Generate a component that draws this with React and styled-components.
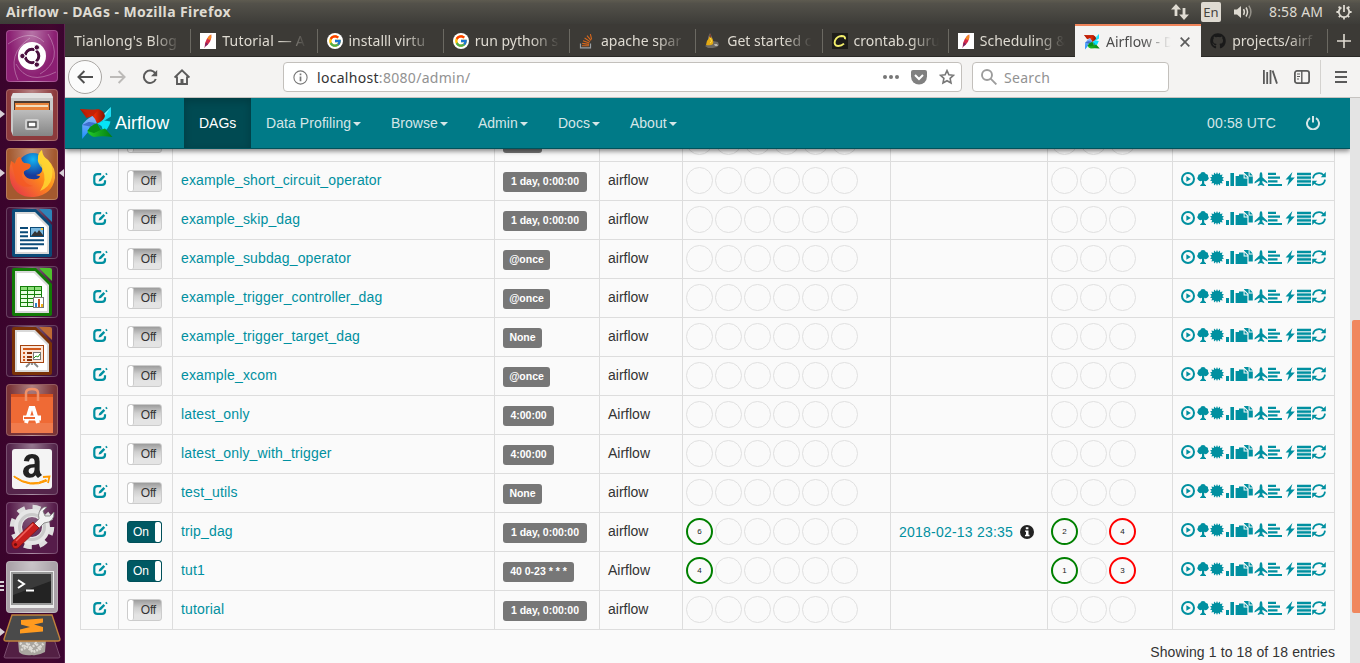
import React from 'react';
import styled, { createGlobalStyle, css } from 'styled-components';
import { FcGoogle } from 'react-icons/fc';
import { FaGithub } from 'react-icons/fa';

const ui = `"Noto Sans", "Open Sans", sans-serif`;
const web = `"Liberation Sans", Arial, sans-serif`;

const Global = createGlobalStyle`
  * { box-sizing: border-box; }
  html, body { margin: 0; padding: 0; }
  body { width: 1360px; height: 663px; overflow: hidden; font-family: ${web}; }
  svg { display: block; flex: none; }
`;

const Screen = styled.div`
  display: flex;
  flex-direction: column;
  width: 1360px;
  height: 663px;
  overflow: hidden;
`;
const Panel = styled.header`
  height: 24px;
  flex: none;
  display: flex;
  align-items: center;
  padding: 0 6px;
  color: #dfdbd2;
  background: linear-gradient(#5e5b50, #53514a 15%, #3d3c38);
  font: 13px/24px ${ui};
`;
const PanelTitle = styled.div`
  flex: 1;
  font-weight: 700;
  font-size: 14px;
  letter-spacing: 0.42px;
`;
const Indicators = styled.div`
  display: flex;
  align-items: center;
  padding-right: 2px;
`;
const Lang = styled.span`
  width: 20px;
  height: 20px;
  margin: 0 13px 0 12px;
  border-radius: 2px;
  background: #dfdbd2;
  color: #46443e;
  text-align: center;
  font: 13px/20px ${ui};
`;
const Clock = styled.span`
  width: 54px;
  margin: 0 13px 0 16px;
  white-space: nowrap;
  font-size: 14px;
  letter-spacing: 0.15px;
`;
const Body = styled.div`
  display: flex;
  flex: 1;
  min-height: 0;
`;
const Launcher = styled.aside`
  width: 65px;
  flex: none;
  display: flex;
  flex-direction: column;
  gap: 7px;
  padding: 6px 0 0 0;
  border-right: 1px solid #5e2450;
  background: linear-gradient(90deg, #3a042c, #42062f 80%, #3b0430);
  overflow: hidden;
`;
const Slot = styled.div`
  height: 52px;
  flex: none;
  display: flex;
  align-items: center;
  position: relative;
  padding-left: 6px;
`;
const Tile = styled.div`
  width: 52px;
  height: 52px;
  border-radius: 4px;
  border: 1px solid rgba(255, 255, 255, 0.2);
  background: radial-gradient(ellipse at 50% 0, rgba(255, 255, 255, 0.38), rgba(255, 255, 255, 0) 65%), ${p => p.$bg};
  svg { margin: -1px; }
`;
const Pip = styled.i`
  position: absolute;
  top: ${p => p.$y || 21}px;
  ${p => (p.$right ? 'right: 0;' : 'left: 0;')}
  border: 4px solid transparent;
  ${p => (p.$right ? 'border-right: 5px solid #d8d0d6; border-left: 0;' : 'border-left: 5px solid #d8d0d6; border-right: 0;')}
`;
const Bars = styled.i`
  position: absolute;
  left: 0;
  top: 20px;
  width: 4px;
  height: 11px;
  background: repeating-linear-gradient(#d8d0d6 0 2px, transparent 2px 4px);
`;
const Folded = styled.div`
  position: relative;
  height: 45px;
  margin-top: -6px;
  padding-left: 3px;
`;

const Browser = styled.main`
  flex: 1;
  min-width: 0;
  display: flex;
  flex-direction: column;
`;
const Tabs = styled.div`
  height: 33px;
  flex: none;
  display: flex;
  background: #3c3a36;
  box-shadow: inset 0 -1px #2a2926;
`;
const Tab = styled.div`
  width: 126.25px;
  flex: none;
  height: 33px;
  display: flex;
  align-items: center;
  position: relative;
  padding-left: 9px;
  gap: 6px;
  color: #dfdbd2;
  font: 14px/33px ${ui};
  ${p => !p.$noSep && css`
    &::after {
      content: '';
      position: absolute;
      right: 0;
      top: 5px;
      width: 1px;
      height: 24px;
      background: #6b6962;
    }
  `}
  ${p => p.$active && css`
    background: #f4f3f2;
    border-top: 2px solid #f0845a;
    color: #4c4c4c;
    line-height: 31px;
  `}
`;
const TabText = styled.span`
  width: ${p => p.$w || 88}px;
  white-space: nowrap;
  letter-spacing: ${p => p.$ls || 0}px;
  mask-image: linear-gradient(90deg, #000 calc(100% - 32px), transparent calc(100% - 3px));
`;
const Favicon = styled.span`
  width: 16px;
  height: 16px;
  display: flex;
  align-items: center;
  justify-content: center;
  flex: none;
  overflow: hidden;
  border-radius: ${p => (p.$round ? '50%' : 0)};
  background: ${p => p.$bg || 'transparent'};
`;
const NewTab = styled.div`
  display: flex;
  align-items: center;
  padding-left: 9px;
`;
const Toolbar = styled.div`
  height: 41px;
  flex: none;
  display: flex;
  align-items: center;
  background: #f4f3f2;
  border-bottom: 1px solid #c6c3c0;
  color: #5a5a5a;
`;
const BackButton = styled.div`
  width: 34px;
  height: 34px;
  margin: 0 8px 0 3px;
  border: 1px solid #a9a6a3;
  border-radius: 50%;
  background: #fbfbfb;
  display: grid;
  place-items: center;
`;
const NavIcons = styled.div`
  display: flex;
  align-items: center;
  gap: 16px;
  width: 173px;
`;
const Field = styled.div`
  height: 30px;
  width: ${p => p.$w}px;
  margin-right: ${p => p.$mr}px;
  display: flex;
  align-items: center;
  border: 1px solid #c3c0bc;
  border-radius: 4px;
  background: #fff;
  padding: 0 6px 0 ${p => p.$pl}px;
  font: 14px/28px ${ui};
  color: #8d8d8d;
`;
const UrlText = styled.span`
  flex: 1;
  padding: 1px 0 0 ${p => p.$pl || 9}px;
  letter-spacing: 0.3px;
  color: #929292;
  b { font-weight: 400; color: #333; }
`;
const FieldIcons = styled.div`
  display: flex;
  align-items: center;
  gap: 12px;
`;
const SidebarIcon = styled.svg`
  margin-left: 16px;
`;
const MenuCell = styled.div`
  height: 34px;
  margin-left: 10px;
  padding-left: 14px;
  border-left: 1px solid #d4d2cf;
  display: flex;
  align-items: center;
`;
const Viewport = styled.div`
  flex: 1;
  min-height: 0;
  display: flex;
  background: #e4e4e4;
`;
const Page = styled.div`
  width: 1285px;
  background: #fafafa;
  overflow: hidden;
  color: #333;
  font: 14px/20px ${web};
`;
const ScrollTrack = styled.div`
  flex: 1;
  padding: 222px 0 0 2px;
`;
const ScrollThumb = styled.div`
  height: 293px;
  background: #f0875e;
  border-radius: 2px 0 0 2px;
`;
const Navbar = styled.nav`
  position: relative;
  z-index: 1;
  height: 51px;
  display: flex;
  padding-left: 15px;
  background: #007a87;
  border-bottom: 1px solid #00525b;
  box-shadow: 0 2px 5px rgba(0, 0, 0, 0.5);
`;
const Brand = styled.div`
  display: flex;
  align-items: center;
  width: 104px;
  color: #fff;
  font-size: 18px;
  letter-spacing: 0.02px;
  gap: 2px;
  span { padding-bottom: 1px; }
`;
const NavItem = styled.div`
  height: 50px;
  display: flex;
  align-items: center;
  width: ${p => p.$w}px;
  padding-left: 15px;
  white-space: nowrap;
  color: ${p => (p.$active ? '#fff' : '#d5e6e7')};
  letter-spacing: ${p => p.$ls || 0}px;
  ${p => p.$active && css`
    background: #004a52;
    box-shadow: inset 0 3px 9px rgba(0, 0, 0, 0.2);
  `}
`;
const Caret = styled.i`
  margin: 2px 0 0 2px;
  border: 4px solid transparent;
  border-top-color: #d5e6e7;
  border-bottom: 0;
`;
const NavRight = styled.div`
  margin-left: auto;
  display: flex;
  align-items: center;
  gap: 30px;
  padding: 0 30px 1px 0;
  color: #d5e6e7;
  letter-spacing: 0.14px;
`;
const Table = styled.div`
  width: 1255px;
  margin: -27px 0 0 15px;
  border: solid #ddd;
  border-width: 1px 0 0 1px;
`;
const Row = styled.div`
  display: grid;
  grid-template-columns: 38px 54px 322px 105px 83px 208px 157px 125px 162px;
  height: 39px;
`;
const Cell = styled.div`
  border: solid #ddd;
  border-width: 0 1px 1px 0;
  display: flex;
  align-items: ${p => (p.$start ? 'flex-start' : 'center')};
  padding: ${p => p.$pad || '0 0 2px 8px'};
  white-space: nowrap;
  letter-spacing: ${p => p.$ls || 0}px;
`;
const Link = styled.span`
  color: #0090a0;
`;
const LastRun = styled.div`
  display: flex;
  align-items: center;
  gap: 7px;
`;
const Badge = styled.span`
  height: 20px;
  width: ${p => p.$w}px;
  text-align: center;
  border-radius: 3px;
  background: #777;
  color: #fff;
  font: 700 10.5px/19px ${web};
`;
const Toggle = styled.div`
  width: 35px;
  height: 22px;
  border-radius: 3px;
  border: 1px solid ${p => (p.$on ? '#00505a' : '#ccc')};
  display: flex;
  overflow: hidden;
  justify-content: space-between;
  flex-direction: ${p => (p.$on ? 'row-reverse' : 'row')};
  font: 12px/21px ${web};
  letter-spacing: -0.2px;
  color: ${p => (p.$on ? '#fff' : '#333')};
  background: ${p => (p.$on ? '#005963' : 'linear-gradient(#9c9c9c, #cfcfcf 40%, #e4e4e4 75%)')};
  padding: ${p => (p.$on ? '0 0 0 5px' : '0 5px 0 0')};
`;
const Knob = styled.i`
  width: 6px;
  background: #fff;
  border: solid #ccc;
  border-width: ${p => (p.$on ? '0' : '0 1px 0 0')};
  border-radius: 2px;
`;
const Ring = styled.span`
  width: 27px;
  height: 27px;
  margin-right: 2px;
  border-radius: 50%;
  border: 1px solid #e0e0e0;
  display: grid;
  place-items: center;
  font: 8px/10px ${web};
  color: #222;
  padding-top: 1px;
  ${p => p.$c && css`
    border: 2px solid ${p.$c};
  `}
`;
const Links = styled.div`
  display: flex;
  gap: 0.55px;
  color: #0090a0;
`;
const Footer = styled.div`
  width: 1270px;
  padding-top: 12px;
  text-align: right;
  letter-spacing: 0.12px;
`;

const Pinwheel = ({ size }) => (
  <svg width={size} height={size} viewBox="0 0 33 33">
    <defs>
      <linearGradient id="pr" x1="0" x2="1"><stop offset="0" stopColor="#a01604" /><stop offset=".6" stopColor="#e92b05" /><stop offset="1" stopColor="#7c1204" /></linearGradient>
      <linearGradient id="pb" x1="0" x2="0" y1="0" y2="1"><stop offset="0" stopColor="#8fb6f7" /><stop offset="1" stopColor="#1c8fff" /></linearGradient>
      <linearGradient id="pg" x1="0" x2="1"><stop offset="0" stopColor="#22c92a" /><stop offset="1" stopColor="#047d10" /></linearGradient>
    </defs>
    <path d="M31 0V9.5L24.5 13.5L17 16.5L19.5 11.5Z" fill="#1bdcf4" />
    <path d="M31 0L21 14L19.5 11.5Z" fill="#7af3ff" />
    <path d="M30.5 14.5Q29 21 23.5 25.5L17 16.5L24.5 13.5Z" fill="#06e3f7" />
    <path d="M23.5 25.5L17 16.5L21.5 19Z" fill="#027a8c" />
    <path d="M0 2Q10 3.4 19 2.2Q24.5 4.5 25 9Q24 14 17 16.5L12.5 9L6.5 11Z" fill="url(#pr)" />
    <path d="M0 2Q10 3.4 19 2.2L12.5 9L6.5 6Z" fill="#c42207" />
    <path d="M2.2 32V18Q5 13 12.5 9Q16 12 17 16.5L10 19.5L8 25Z" fill="url(#pb)" />
    <path d="M2.2 18L10 19.5L17 16.5Q11 14.5 8.5 15Z" fill="#3f6fd0" />
    <path d="M32.5 30Q22 28.6 14 30Q8.5 28 7.4 24Q11 18 17 16.5L20.5 23L25 21.5Z" fill="url(#pg)" />
    <path d="M7.4 24Q11 18 17 16.5L20.5 23L14 26Z" fill="#078f18" />
  </svg>
);
const Feather = () => (
  <Favicon $bg="#fff">
    <svg width="16" height="16" viewBox="0 0 16 16">
      <path d="M4.6 15Q4.2 10 6.8 6 9 2 11.2 1.4 12 4.6 10 8.8 8 12.2 5.6 13Z" fill="#d32a4a" />
      <path d="M7 6Q9 2 11.2 1.4 11.6 4 10.6 7Z" fill="#f58a22" />
      <path d="M4.6 15Q5 12 6 9.5L8 11Q6.5 13 5.6 13Z" fill="#73246a" />
    </svg>
  </Favicon>
);
const StackIcon = () => (
  <svg width="16" height="16" viewBox="0 0 16 16" fill="none">
    <path d="M1.5 10.5V14.8H11.5V10.5" stroke="#9aa0a5" strokeWidth="1.2" />
    <path d="M3 12.8H10M3.2 10.4L10 11.4M4 7.8L10.4 10M5.6 5L11 8.6M8 2.6L12 7.4M11.4 1.2L12.6 6.4" stroke="#d9681c" strokeWidth="1.1" />
  </svg>
);
const Camp = () => (
  <svg width="16" height="16" viewBox="0 0 16 16">
    <path d="M3 4L5 0L7 4L8 8L13 9L14 12L12 14L8 15H3L0 13L3 11Z" fill="#6d6a64" />
    <path d="M1 12Q1 8 4 5Q4 2 6 4Q9 7 8 11Q6 13 1 12Z" fill="#e2a914" />
    <path d="M5 5Q8 9 5 10" stroke="#ffe04a" fill="none" />
    <path d="M4 3L6 1V5Z" fill="#813f2c" />
    <path d="M9 11L12 11 13 13 10 13Z" fill="#b9b6ad" />
  </svg>
);
const Cron = () => (
  <Favicon $bg="#1d1c19">
    <svg width="16" height="16" viewBox="0 0 16 16">
      <path d="M13 6.2Q13.6 3 9.5 3 5 3.2 3 7.6 1.5 12.6 6.2 13 9.5 13 12 10.6" fill="none" stroke="#f3ee6b" strokeWidth="1.9" />
    </svg>
  </Favicon>
);

const stroke = { fill: 'none', stroke: 'currentColor' };
const PlayCircle = () => (
  <svg width="14" height="16" viewBox="0 0 14 16">
    <circle cx="7" cy="8" r="6" {...stroke} strokeWidth="2" />
    <path d="M5.4 5.2V10.8L9.8 8Z" fill="currentColor" />
  </svg>
);
const Tree = () => (
  <svg width="14" height="16" viewBox="0 0 14 16" fill="currentColor">
    <path d="M7 1Q9.4 1 9.8 3 12.4 3.2 12 5.4 13.8 7.2 12 8.8 10.6 10.8 8.2 9.8L8.2 12.5 9.6 14H10V15H4.2V14H4.6L6 12.5V9.8Q3.4 10.8 2.1 8.8 .3 7.2 2 5.4 1.8 3.2 4.3 3 4.6 1 7 1Z" />
  </svg>
);
const Certificate = () => (
  <svg width="14" height="16" viewBox="0 0 14 16" fill="currentColor">
    <path d="M7 1L8 3.2 10 1.6 10.2 4 12.6 3.6 11.8 5.8 14 6.4 12.3 8 14 9.6 11.8 10.2 12.6 12.4 10.2 12 10 14.4 8 12.8 7 15 6 12.8 4 14.4 3.8 12 1.4 12.4 2.2 10.2 0 9.6 1.7 8 0 6.4 2.2 5.8 1.4 3.6 3.8 4 4 1.6 6 3.2Z" />
  </svg>
);
const Stats = () => (
  <svg width="14" height="16" viewBox="0 0 14 16" fill="currentColor">
    <path d="M1 10h3v5H1zM5.4 2h3.6v13H5.4zM10.6 5h3.6v10h-3.6z" />
  </svg>
);
const Duplicate = () => (
  <svg width="14" height="16" viewBox="0 0 14 16" fill="currentColor">
    <path d="M-.6 3.4H4.6V7.6H8.4V15H-.6ZM5.6 3.6L8.6 6.6H5.6ZM5 1H9.6V5.4H13.8V12.6H9.6V6L5 1.6ZM10.6 1L13.8 4.4H10.6Z" />
  </svg>
);
const Plane = () => (
  <svg width="14" height="16" viewBox="0 0 14 16" fill="currentColor">
    <path d="M7 1Q8.4 1.6 8.4 4V6.2L13.4 11V12.4L8.4 9.8V12L10.2 14V15L7 14 3.8 15V14L5.6 12V9.8L.6 12.4V11L5.6 6.2V4Q5.6 1.6 7 1Z" />
  </svg>
);
const AlignLeft = () => (
  <svg width="14" height="16" viewBox="0 0 14 16" fill="currentColor">
    <path d="M0 1.8h8V4H0zM0 5.5h12v2.2H0zM0 9.2h9.5v2.2H0zM0 12.9h14V15H0z" />
  </svg>
);
const Flash = () => (
  <svg width="14" height="16" viewBox="0 0 14 16" fill="currentColor">
    <path d="M9.4 1L2.6 8.6H6L4.2 15 11.8 6.6H7.8Z" />
  </svg>
);
const AlignJustify = () => (
  <svg width="14" height="16" viewBox="0 0 14 16" fill="currentColor">
    <path d="M0 1.8h14V4H0zM0 5.5h14v2.2H0zM0 9.2h14v2.2H0zM0 12.9h14V15H0z" />
    <path opacity=".25" d="M0 2h14v13H0z" />
  </svg>
);
const Refresh = () => (
  <svg width="14" height="16" viewBox="0 0 14 16">
    <path d="M1 7.4Q1.6 2.4 7 2.1 9.8 2 11.6 4.2M13 8.6Q12.4 13.6 7 13.9 4.2 14 2.4 11.8" {...stroke} strokeWidth="1.8" />
    <path d="M13.8 1V6.2H8.8ZM.2 15V9.8H5.2Z" fill="currentColor" />
  </svg>
);
const Edit = () => (
  <svg width="15" height="15" viewBox="0 0 15 15">
    <path d="M8.2 2.2H4.4Q1.3 2.2 1.3 5V10Q1.3 12.9 4.4 12.9H9Q12 12.9 12 10V8.2" fill="none" stroke="#0090a0" strokeWidth="2.2" />
    <path d="M5.6 9.6L6.2 7.2 10.5 3 12.2 4.7 8 9ZM12.2 1.9L13.2 .8 14.7 2.3 13.6 3.3Z" fill="#0090a0" />
  </svg>
);
const Power = () => (
  <svg width="14" height="14" viewBox="0 0 14 14" {...stroke} strokeWidth="2">
    <path d="M4 2.2A6 6 0 1 0 10 2.2M7 0V6.6" />
  </svg>
);
const Info = () => (
  <svg width="14" height="14" viewBox="0 0 14 14">
    <circle cx="7" cy="7" r="7" fill="#222" />
    <path d="M5.8 2.2h2.6v2H5.8zM5 5.4h3.5v4.3h1v1.5H5V9.7h1V6.8H5z" fill="#fff" />
  </svg>
);

const docs = {
  writer: ['#0a4a78', '#2d84b8'],
  calc: ['#127a06', '#4fc02e'],
  impress: ['#7a3208', '#bd6a34'],
};
const Doc = ({ kind, children }) => (
  <svg width="52" height="52" viewBox="0 0 52 52">
    <path d="M8 2H30L46 18V48Q46 50 44 50H8Q6 50 6 48V4Q6 2 8 2Z" fill={docs[kind][0]} />
    <path d="M33 2H44Q46 2 46 4V15Z" fill={docs[kind][1]} />
    <path d="M9 5H29L43 19V47H9Z" fill="#d9d9d9" />
    <path d="M11 7H28L41 20V45H11Z" fill="#fff" />
    {children}
  </svg>
);
const Ubuntu = () => (
  <svg width="52" height="52" viewBox="0 0 52 52">
    <g fill="none" stroke="#fff" strokeOpacity=".3">
      <path d="M2 14Q24 -2 38 12M12 50Q0 24 24 8M50 42Q22 56 10 34M42 4Q58 30 34 44" />
    </g>
    <circle cx="26" cy="26" r="14" fill="#fff" />
    <circle cx="26" cy="26" r="6.8" fill="none" stroke="#4a0f3e" strokeWidth="3" />
    <path d="M26 26L13 26M26 26L32.5 14.7M26 26L32.5 37.3" stroke="#fff" strokeWidth="1.4" />
    <circle cx="26" cy="26" r="5" fill="#fff" />
    <g fill="#4a0f3e" stroke="#fff">
      <circle cx="16.4" cy="26" r="2.7" /><circle cx="30.8" cy="17.4" r="2.7" /><circle cx="30.8" cy="34.6" r="2.7" />
    </g>
  </svg>
);
const Files = () => (
  <svg width="52" height="52" viewBox="0 0 52 52">
    <defs><linearGradient id="fl" x1="0" x2="0" y1="0" y2="1"><stop offset="0" stopColor="#bdbdbd" /><stop offset="1" stopColor="#858585" /></linearGradient></defs>
    <path d="M7 4H45L47 8V42L45 47H7L5 42V8Z" fill="#c9c9c9" />
    <path d="M7 4H45L47 9H5Z" fill="#e2e2e2" />
    <path d="M8 12H44V23H8Z" fill="#4b3a31" />
    <path d="M9 14H43V22H9Z" fill="#e8833a" />
    <path d="M10 16H42V18H10Z" fill="#f3ddbd" />
    <path d="M7 21H45Q47 21 47 23V45Q47 47 45 47H7V21Z" fill="url(#fl)" />
    <rect x="19" y="30" width="14" height="11" rx="2" fill="#cfcfcf" />
    <rect x="22" y="33" width="8" height="5" fill="#fff" stroke="#444" strokeWidth="1.4" />
  </svg>
);
const Firefox = () => (
  <svg width="52" height="52" viewBox="0 0 52 52">
    <defs>
      <linearGradient id="f1" x1="1" x2="0" y1="0" y2="1"><stop offset="0" stopColor="#ffe84a" /><stop offset=".45" stopColor="#ff8c1a" /><stop offset="1" stopColor="#e22850" /></linearGradient>
      <radialGradient id="f2" cx=".5" cy=".2"><stop offset="0" stopColor="#12b5f3" /><stop offset="1" stopColor="#173b9c" /></radialGradient>
    </defs>
    <circle cx="27" cy="21" r="16" fill="url(#f2)" />
    <path d="M5 13Q7 14 9 16Q11 8 15 9Q15 13 18 15L24 16Q26 20 20 22Q17 23 18 26Q20 31 26 31Q33 32 34 28Q32 28 30 27Q38 26 36 17Q31 14 32 10Q32 5 36 2Q36 8 42 12Q50 20 49 30Q46 47 28 49Q11 50 5 35Q2 24 5 13Z" fill="url(#f1)" />
    <path d="M32 10Q32 5 36 2Q36 8 42 12Q48 19 46 29Q44 39 34 43Q42 32 36 20Q31 15 32 10Z" fill="#ffdc32" opacity=".8" />
    <path d="M5 13Q7 14 9 16Q11 8 15 9Q15 13 18 15L24 16Q26 20 20 22Q16 23 16 28Q18 36 27 38Q15 41 10 33Z" fill="#f45a22" opacity=".75" />
  </svg>
);
const Writer = () => (
  <Doc kind="writer">
    <path d="M14 20H22V22H14ZM14 24.3H22V26.3H14ZM14 28.3H22V30.3H14ZM14 32.3H38V34.3H14ZM14 36.3H38V38.3H14ZM14 40.3H32V42.3H14Z" fill="#0b4b78" />
    <rect x="24.5" y="20.5" width="13" height="9" fill="#7bb9df" stroke="#0b4b78" />
    <path d="M25 29L29 24 31 26 33 23 37 28V29Z" fill="#343434" />
    <path d="M35 21h2v2h-2z" fill="#f7c331" />
  </Doc>
);
const Calc = () => (
  <Doc kind="calc">
    <rect x="14" y="20" width="22" height="21" fill="#15800b" />
    {[0, 1, 2, 3, 4].map(r => [0, 1, 2].map(c => (
      <rect key={`${r}${c}`} x={15 + c * 7} y={21 + r * 4} width="6" height="3" fill={r === 0 ? '#8edf7a' : '#e6ffe0'} />
    )))}
    <rect x="27.5" y="31.5" width="10" height="10" fill="#fff" stroke="#777" />
    <path d="M29 37h2v4h-2z" fill="#2a86c8" /><path d="M32 33h2v8h-2z" fill="#c9551c" /><path d="M35 38h2v3h-2z" fill="#f2b218" />
  </Doc>
);
const Impress = () => (
  <Doc kind="impress">
    <path d="M24 38L20 42M28 38L32 42M26 38V40" stroke="#888" strokeWidth="1.8" />
    <rect x="14.5" y="20.5" width="23" height="17" fill="#fbe6d8" stroke="#a5430f" />
    <path d="M17 23H35V25H17ZM17 27h2v2h-2zM17 31h2v2h-2zM17 34h2v2h-2z" fill="#d2591a" />
    <path d="M21 27h5v2h-5zM21 31h5v2h-5zM21 34h5v2h-5z" fill="#8a330a" />
    <rect x="27.5" y="27.5" width="7" height="7" fill="#fff" stroke="#777" />
    <path d="M28 33L30 31 32 32 34 29" stroke="#26981c" fill="none" />
  </Doc>
);
const Software = () => (
  <svg width="52" height="52" viewBox="0 0 52 52">
    <path d="M5 10H47V49H5Z" fill="#ef6a35" /><path d="M5 39H47V49H5Z" fill="#f07b4c" /><path d="M5 10H47V13H5Z" fill="#d8521f" />
    <path d="M20 17V9Q20 5 26 5T32 9V17" fill="none" stroke="#f09168" strokeWidth="2.5" />
    <path d="M20 39L24.6 24H27.4L32 39" fill="none" stroke="#fff" strokeWidth="4" />
    <path d="M17 31.5H35V36.5H17Z" fill="#fff" /><path d="M18 33H29V35H18Z" fill="#ef6a35" />
  </svg>
);
const Amazon = () => (
  <svg width="52" height="52" viewBox="0 0 52 52">
    <rect x="6" y="6" width="40" height="40" rx="3" fill="#f4f4f4" />
    <path d="M17.8 18Q19 11 26 11 34 11 33.6 18.5V27Q33.6 30 36 32L32 35Q30.4 33.6 29.8 32.2 27.2 35 23.2 34.8 17 34 17 28.2 17.4 21.2 28.6 21V18.6Q28.4 15.2 26 15.2 23.4 15.2 23 18.6ZM28.6 24.6Q22.4 24.4 22.6 28.2 22.8 30.9 25 31 28.8 30.8 28.6 24.6Z" fill="#222" />
    <path d="M8 33Q25 45 40 36.5L41 38Q24 46 8 34Z" fill="#ff9900" stroke="#ff9900" strokeWidth="1" />
    <path d="M37 34L43.5 33.5 42 40" fill="none" stroke="#ff9900" strokeWidth="1.8" />
  </svg>
);
const Settings = () => (
  <svg width="52" height="52" viewBox="0 0 52 52">
    <circle cx="26" cy="25" r="19.5" fill="none" stroke="#dedede" strokeWidth="5.5" strokeDasharray="7.8 7.51" />
    <circle cx="26" cy="25" r="14" fill="none" stroke="#e6e6e6" strokeWidth="8" />
    <circle cx="26" cy="25" r="12.5" fill="none" stroke="#cacaca" strokeWidth="3" />
    <path d="M28 22L33 17Q31 9 38 5L41 5L37 9 39 14 44 14 48 10Q49 20 38 21L33 26Z" fill="#f2f2f2" stroke="#777" strokeWidth=".8" />
    <path d="M27 20L33 26 12 46Q7 48 6 43Q5 41 7 39Z" fill="#c9201e" stroke="#7d100f" strokeWidth=".7" />
    <path d="M27 22L10 39" stroke="#f0635d" strokeWidth="1.6" />
    <circle cx="9.5" cy="42.5" r="1.6" fill="#6d0d0d" />
  </svg>
);
const Terminal = () => (
  <svg width="52" height="52" viewBox="0 0 52 52">
    <rect x="4" y="10" width="44" height="37" fill="#ececec" />
    <rect x="5" y="11" width="42" height="33" fill="#999" />
    <rect x="7" y="13" width="38" height="29" fill="#232323" />
    <path d="M7 13H45V20L7 34Z" fill="#444" opacity=".7" />
    <path d="M12 19L18 23 12 27M20 29.5H28" fill="none" stroke="#fff" strokeWidth="2" />
  </svg>
);
const Sublime = () => (
  <svg width="58" height="45" viewBox="0 0 58 45">
    <path d="M8 22L1 43Q1 44 3 44H55Q57 44 57 43L50 22Z" fill="#532044" stroke="#7a4c6e" />
    <path d="M15 26H43L42 38Q35 42 29 41Q20 42 16 38Z" fill="#a9a59f" />
    <path d="M17 29L21 33 25 29 28 35 33 29 36 34 41 29M18 36L24 33 30 38 39 34" stroke="#dedbd5" fill="none" strokeWidth="2.5" strokeDasharray="2 1" />
    <path d="M9 1H49L57 25Q57 27 55 27H3Q1 27 1 25Z" fill="#4a4a4a" stroke="#c0813c" strokeWidth="1.4" />
    <path d="M18 6L40 4.5V8.5L31 10.5 40 13V17.5L17 19.5V15.5L27 13 18 10.5Z" fill="#ff9a1f" />
  </svg>
);

const apps = [
  [Ubuntu, '#8b1f72'], [Files, '#8c3a3c', 1], [Firefox, '#a4592f', 1, 1], [Writer, '#421038'], [Calc, '#421038'],
  [Impress, '#421038'], [Software, '#7a3437'], [Amazon, '#55254b'], [Settings, '#561c4a'], [Terminal, '#aaa2a8', 2],
];
const rows = [
  ['', 'None', 39, 'airflow'],
  ['example_short_circuit_operator', '1 day, 0:00:00', 84, 'airflow'],
  ['example_skip_dag', '1 day, 0:00:00', 84, 'airflow'],
  ['example_subdag_operator', '@once', 47, 'airflow'],
  ['example_trigger_controller_dag', '@once', 47, 'airflow'],
  ['example_trigger_target_dag', 'None', 39, 'airflow'],
  ['example_xcom', '@once', 47, 'airflow'],
  ['latest_only', '4:00:00', 51, 'Airflow'],
  ['latest_only_with_trigger', '4:00:00', 51, 'Airflow'],
  ['test_utils', 'None', 39, 'airflow'],
  ['trip_dag', '1 day, 0:00:00', 84, 'airflow', 6, 2, 4, '2018-02-13 23:35'],
  ['tut1', '40 0-23 * * *', 71, 'Airflow', 4, 1, 3],
  ['tutorial', '1 day, 0:00:00', 84, 'airflow'],
];

const DagRow = ({ row: [name, schedule, w, owner, ok, runs, failed, last] }) => (
  <Row>
    <Cell $start $pad="10px 0 0 12px"><Edit /></Cell>
    <Cell $start $pad="8px 0 0 8px">
      <Toggle $on={!!ok}><Knob $on={!!ok} />{ok ? 'On' : 'Off'}</Toggle>
    </Cell>
    <Cell $ls={0.15}><Link>{name}</Link></Cell>
    <Cell $start $pad="10px 0 0 8px"><Badge $w={w}>{schedule}</Badge></Cell>
    <Cell>{owner}</Cell>
    <Cell $pad="0 0 2px 3px">
      <Ring $c={ok && 'green'}>{ok}</Ring><Ring /><Ring /><Ring /><Ring /><Ring />
    </Cell>
    <Cell $ls={0.22} $pad="0 0 1px 8px">{last && <LastRun><Link>{last}</Link><Info /></LastRun>}</Cell>
    <Cell $pad="0 0 2px 3px">
      <Ring $c={runs && 'green'}>{runs}</Ring><Ring /><Ring $c={failed && 'red'}>{failed}</Ring>
    </Cell>
    <Cell $start $pad="9px 0 0 8px">
      <Links>
        <PlayCircle /><Tree /><Certificate /><Stats /><Duplicate /><Plane /><AlignLeft /><Flash /><AlignJustify /><Refresh />
      </Links>
    </Cell>
  </Row>
);

export default function App() {
  return (
    <Screen>
      <Global />
      <Panel>
        <PanelTitle>Airflow - DAGs - Mozilla Firefox</PanelTitle>
        <Indicators>
          <svg width="18" height="18" viewBox="0 0 18 18" fill="#dfdbd2">
            <path d="M5 1L10 6.5H6.4V13H3.6V6.5H0ZM13 17L8.2 11.5H11.6V5H14.4V11.5H18Z" />
          </svg>
          <Lang>En</Lang>
          <svg width="19" height="16" viewBox="0 0 19 16" fill="none" stroke="#dfdbd2" strokeWidth="1.5">
            <path d="M0 5.5H3L7 2V14L3 10.5H0Z" fill="#dfdbd2" stroke="none" />
            <path d="M9.5 5.2Q11.2 8 9.5 10.8M12 3.5Q15 8 12 12.5" /><path opacity=".5" d="M14.8 1.6Q19 8 14.8 14.4" />
          </svg>
          <Clock>8:58 AM</Clock>
          <svg width="16" height="16" viewBox="0 0 16 16" fill="none" stroke="#dfdbd2">
            <path d="M5.4 3.4A5.2 5.2 0 1 0 10.6 3.4M8 1V8" strokeWidth="1.8" />
            <path d="M2.6 2.6L4.2 4.2M13.4 2.6L11.8 4.2M.4 8H2.8M15.6 8H13.2M2.8 13.2L4.2 11.8M13.2 13.2L11.8 11.8M8 13.2V15.6" strokeWidth="1.8" />
          </svg>
        </Indicators>
      </Panel>
      <Body>
        <Launcher>
          {apps.map(([Icon, bg, pip, right], i) => (
            <Slot key={i}>
              {pip === 1 && <Pip />}{pip === 2 && <Bars />}
              <Tile $bg={bg}><Icon /></Tile>
              {right && <Pip $right />}
            </Slot>
          ))}
          <Folded><Pip $y={14} /><Sublime /></Folded>
        </Launcher>
        <Browser>
          <Tabs>
            <Tab><TabText $w={110} $ls={0.2}>Tianlong's Blog</TabText></Tab>
            <Tab><Feather /><TabText $ls={0.2}>Tutorial — A</TabText></Tab>
            <Tab><Favicon $round $bg="#fff"><FcGoogle size={14} /></Favicon><TabText>installl virtu</TabText></Tab>
            <Tab><Favicon $round $bg="#fff"><FcGoogle size={14} /></Favicon><TabText>run python s</TabText></Tab>
            <Tab><StackIcon /><TabText>apache spar</TabText></Tab>
            <Tab><Camp /><TabText>Get started c</TabText></Tab>
            <Tab><Cron /><TabText>crontab.guru</TabText></Tab>
            <Tab $noSep><Feather /><TabText>Scheduling &amp;</TabText></Tab>
            <Tab $active $noSep>
              <Pinwheel size={16} /><TabText $w={68}>Airflow - D</TabText>
              <svg width="10" height="10" viewBox="0 0 10 10" stroke="#5c5c5c" strokeWidth="1.7"><path d="M.7 .7L9.3 9.3M9.3 .7L.7 9.3" /></svg>
            </Tab>
            <Tab><FaGithub size={16} color="#191919" /><TabText>projects/airf</TabText></Tab>
            <NewTab><svg width="14" height="14" viewBox="0 0 14 14" stroke="#dfdbd2" strokeWidth="1.6"><path d="M7 0V14M0 7H14" /></svg></NewTab>
          </Tabs>
          <Toolbar>
            <BackButton>
              <svg width="16" height="14" viewBox="0 0 16 14" fill="none" stroke="#4f4f4f" strokeWidth="1.9"><path d="M16 7H1.5M7.4 1L1.4 7 7.4 13" /></svg>
            </BackButton>
            <NavIcons>
              <svg width="16" height="14" viewBox="0 0 16 14" fill="none" stroke="#bcbab8" strokeWidth="1.9"><path d="M0 7H14.5M8.6 1L14.6 7 8.6 13" /></svg>
              <svg width="16" height="16" viewBox="0 0 16 16" fill="none" stroke="#5a5a5a" strokeWidth="2"><path d="M13.4 4.6A6.2 6.2 0 1 0 13.8 10" /><path d="M15.2 1V7.2H9Z" fill="#5a5a5a" stroke="none" /></svg>
              <svg width="16" height="16" viewBox="0 0 16 16" fill="none" stroke="#5a5a5a" strokeWidth="1.9"><path d="M.6 8.6L8 1.4 15.4 8.6M3 7.6V15H13V7.6" /><path d="M8 15V10" strokeWidth="3" /></svg>
            </NavIcons>
            <Field $w={679} $pl={9} $mr={10}>
              <svg width="15" height="15" viewBox="0 0 15 15" fill="none" stroke="#777"><circle cx="7.5" cy="7.5" r="6.6" strokeWidth="1.1" /><path d="M7.5 6.5V11.2M7.5 3.6V5.3" strokeWidth="1.7" /></svg>
              <UrlText><b>localhost</b>:8080/admin/</UrlText>
              <FieldIcons>
                <svg width="16" height="4" viewBox="0 0 16 4" fill="#777"><circle cx="2" cy="2" r="2" /><circle cx="8" cy="2" r="2" /><circle cx="14" cy="2" r="2" /></svg>
                <svg width="16" height="15" viewBox="0 0 16 15"><path d="M2 0H14Q16 0 16 2V6.5A8 8 0 0 1 0 6.5V2Q0 0 2 0Z" fill="#808080" /><path d="M4 5L8 9 12 5" fill="none" stroke="#fff" strokeWidth="2" /></svg>
                <svg width="16" height="16" viewBox="0 0 16 16" fill="none" stroke="#777" strokeWidth="1.6"><path d="M8 1.6L9.9 5.8 14.5 6.3 11.1 9.4 12 14 8 11.7 4 14 4.9 9.4 1.5 6.3 6.1 5.8Z" /></svg>
              </FieldIcons>
            </Field>
            <Field $w={197} $pl={8} $mr={93}>
              <svg width="16" height="16" viewBox="0 0 16 16" fill="none" stroke="#9c9c9c" strokeWidth="1.9"><circle cx="6" cy="6" r="5" /><path d="M9.6 9.6L15.4 15.4" /></svg>
              <UrlText $pl={7}>Search</UrlText>
            </Field>
            <svg width="16" height="14" viewBox="0 0 16 14" fill="none" stroke="#5a5a5a" strokeWidth="1.8"><path d="M1.9 0V14M5.2 2V14M8.5 0V14M10.6 .6L15 13.6" /></svg>
            <SidebarIcon width="16" height="14" viewBox="0 0 16 14" fill="none" stroke="#5a5a5a" strokeWidth="1.8"><rect x=".9" y=".9" width="14.2" height="12.2" rx="2.2" /><path d="M7.8 1V13" strokeWidth="1.4" /><path d="M3 4H6M3 6.5H6M3 9H5" strokeWidth="1" /></SidebarIcon>
            <MenuCell><svg width="12" height="12" viewBox="0 0 12 12" stroke="#5a5a5a" strokeWidth="1.9"><path d="M0 1H12M0 6H12M0 11H12" /></svg></MenuCell>
          </Toolbar>
          <Viewport>
            <Page>
              <Navbar>
                <Brand><Pinwheel size={33} /><span>Airflow</span></Brand>
                <NavItem $active $w={67}>DAGs</NavItem>
                <NavItem $w={125} $ls={0.08}>Data Profiling<Caret /></NavItem>
                <NavItem $w={87}>Browse<Caret /></NavItem>
                <NavItem $w={80}>Admin<Caret /></NavItem>
                <NavItem $w={72}>Docs<Caret /></NavItem>
                <NavItem $w={77}>About<Caret /></NavItem>
                <NavRight>00:58 UTC<Power /></NavRight>
              </Navbar>
              <Table>{rows.map((row, i) => <DagRow key={i} row={row} />)}</Table>
              <Footer>Showing 1 to 18 of 18 entries</Footer>
            </Page>
            <ScrollTrack><ScrollThumb /></ScrollTrack>
          </Viewport>
        </Browser>
      </Body>
    </Screen>
  );
}
